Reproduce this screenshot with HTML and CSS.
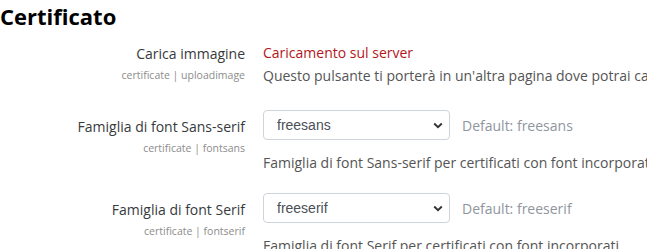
FILE: index.html
```html
<!DOCTYPE html>
<html lang="it">
<head>
<meta charset="utf-8">
<link rel="stylesheet" href="styles.css">
</head>
<body>
<h3 class="title">Certificato</h3>
<div class="settings">
  <div class="row">
    <div class="label">
      <div class="name">Carica immagine</div>
      <div class="key">certificate | uploadimage</div>
    </div>
    <div class="field">
      <a class="link" href="#">Caricamento sul server</a>
      <div class="desc">Questo pulsante ti porterà in un'altra pagina dove potrai caricare le immagini</div>
    </div>
  </div>
  <div class="row row-select">
    <div class="label">
      <div class="name">Famiglia di font Sans-serif</div>
      <div class="key">certificate | fontsans</div>
    </div>
    <div class="field">
      <div class="control">
        <div class="select"><span>freesans</span><svg width="10" height="7" viewBox="0 0 10 7"><path d="M1.2 1.5 L5 5.2 L8.8 1.5" fill="none" stroke="#333" stroke-width="1.9"/></svg></div>
        <span class="default">Default: freesans</span>
      </div>
      <div class="desc">Famiglia di font Sans-serif per certificati con font incorporati</div>
    </div>
  </div>
  <div class="row row-select">
    <div class="label">
      <div class="name">Famiglia di font Serif</div>
      <div class="key">certificate | fontserif</div>
    </div>
    <div class="field">
      <div class="control">
        <div class="select"><span>freeserif</span><svg width="10" height="7" viewBox="0 0 10 7"><path d="M1.2 1.5 L5 5.2 L8.8 1.5" fill="none" stroke="#333" stroke-width="1.9"/></svg></div>
        <span class="default">Default: freeserif</span>
      </div>
      <div class="desc">Famiglia di font Serif per certificati con font incorporati</div>
    </div>
  </div>
</div>
</body>
</html>
```
FILE: styles.css
```css
html, body {
  margin: 0;
  padding: 0;
  background: #fff;
  overflow: hidden;
}
body {
  font-family: "Open Sans", sans-serif;
  color: #373a3c;
  width: 647px;
  height: 249px;
}
.title {
  margin: 0;
  padding: 1px 0 0 0;
  font-size: 22px;
  font-weight: 700;
  color: #000;
  line-height: 30px;
}
.settings {
  padding-top: 12px;
}
.row {
  display: flex;
  gap: 18px;
  margin-bottom: 24px;
}
.row-select {
  margin-bottom: 20px;
}
.label {
  width: 245px;
  flex: none;
  text-align: right;
}
.name {
  font-size: 14px;
  line-height: 20px;
  padding-top: 1px;
  color: #373a3c;
}
.key {
  font-size: 10.5px;
  line-height: 18px;
  margin-top: 2px;
  color: #8c8c8c;
}
.field {
  flex: none;
  width: 384px;
  white-space: nowrap;
  overflow: hidden;
}
.link {
  display: block;
  font-size: 14px;
  line-height: 20px;
  color: #b4151b;
  text-decoration: none;
}
.desc {
  font-size: 14px;
  line-height: 20px;
  color: #555;
  margin-top: 3px;
}
.row-select .name {
  padding-top: 7px;
}
.control {
  display: flex;
  align-items: center;
  gap: 12px;
}
.select {
  box-sizing: border-box;
  width: 187px;
  height: 30px;
  border: 1px solid #ced4da;
  border-radius: 4px;
  display: flex;
  align-items: center;
  justify-content: space-between;
  padding: 0 6px 0 13px;
  font-family: "Liberation Sans", Arial, sans-serif;
  font-size: 14px;
  color: #495057;
}
.default {
  font-size: 14px;
  color: #8f959e;
}
.row-select .desc {
  margin-top: 13px;
}
```
